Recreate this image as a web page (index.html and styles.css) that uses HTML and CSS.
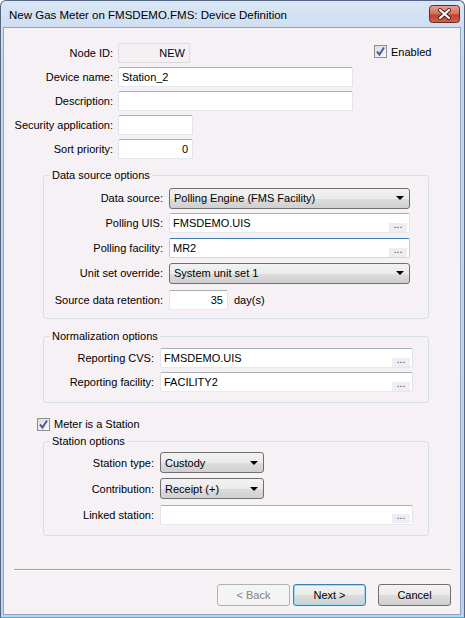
FILE: index.html
```html
<!DOCTYPE html>
<html lang="en">
<head>
    <meta charset="UTF-8">
    <title>New Gas Meter on FMSDEMO.FMS: Device Definition</title>
    <link rel="stylesheet" href="styles.css">
</head>
<body>
    <div class="window">
        <!-- title bar -->
        <div class="titlebar">
            <span class="title">New Gas Meter on FMSDEMO.FMS: Device Definition</span>
            <div class="close-btn">
                <svg width="31" height="18" viewBox="0 0 31 18">
                    <defs>
                        <linearGradient id="red" x1="0" y1="0" x2="0" y2="1">
                            <stop offset="0" stop-color="#e8a493"/>
                            <stop offset="0.5" stop-color="#d0705f"/>
                            <stop offset="0.55" stop-color="#c0402e"/>
                            <stop offset="1" stop-color="#d2614c"/>
                        </linearGradient>
                    </defs>
                    <rect x="0.5" y="0.5" width="30" height="17" rx="3" fill="url(#red)" stroke="#6b2a22"/>
                    <path d="M11 5 L20 13 M20 5 L11 13" stroke="#40201c" stroke-width="4" stroke-linecap="round"/>
                    <path d="M11 5 L20 13 M20 5 L11 13" stroke="#fff" stroke-width="2.2" stroke-linecap="round"/>
                </svg>
            </div>
        </div>

        <div class="client">
            <!-- general -->
            <div class="general">
                <div class="row">
                    <span class="label">Node ID:</span>
                    <div class="field readonly w-short num">NEW</div>
                    <label class="check enabled">
                        <span class="box">
                            <svg width="13" height="13" viewBox="0 0 13 13"><path d="M3 6.5 L5.5 9.5 L10 2.5" fill="none" stroke="#4a5e9c" stroke-width="2"/></svg>
                        </span>
                        Enabled
                    </label>
                </div>
                <div class="row">
                    <span class="label">Device name:</span>
                    <div class="field w-long">Station_2</div>
                </div>
                <div class="row">
                    <span class="label">Description:</span>
                    <div class="field w-long"></div>
                </div>
                <div class="row">
                    <span class="label">Security application:</span>
                    <div class="field w-mid"></div>
                </div>
                <div class="row">
                    <span class="label">Sort priority:</span>
                    <div class="field w-mid num">0</div>
                </div>
            </div>

            <!-- data source -->
            <fieldset class="group source">
                <legend>Data source options</legend>
                <div class="row">
                    <span class="label">Data source:</span>
                    <div class="combo w-wide"><span>Polling Engine (FMS Facility)</span><i class="arrow"></i></div>
                </div>
                <div class="row">
                    <span class="label">Polling UIS:</span>
                    <div class="field browse w-wide"><span>FMSDEMO.UIS</span><b>...</b></div>
                </div>
                <div class="row">
                    <span class="label">Polling facility:</span>
                    <div class="field browse focused w-wide"><span>MR2</span><b>...</b></div>
                </div>
                <div class="row">
                    <span class="label">Unit set override:</span>
                    <div class="combo w-wide"><span>System unit set 1</span><i class="arrow"></i></div>
                </div>
                <div class="row retention">
                    <span class="label">Source data retention:</span>
                    <div class="field w-days num">35</div>
                    <span class="unit">day(s)</span>
                </div>
            </fieldset>

            <!-- normalization -->
            <fieldset class="group norm">
                <legend>Normalization options</legend>
                <div class="row">
                    <span class="label">Reporting CVS:</span>
                    <div class="field browse w-full"><span>FMSDEMO.UIS</span><b>...</b></div>
                </div>
                <div class="row">
                    <span class="label">Reporting facility:</span>
                    <div class="field browse w-full"><span>FACILITY2</span><b>...</b></div>
                </div>
            </fieldset>

            <label class="check station-check">
                <span class="box">
                    <svg width="13" height="13" viewBox="0 0 13 13"><path d="M3 6.5 L5.5 9.5 L10 2.5" fill="none" stroke="#4a5e9c" stroke-width="2"/></svg>
                </span>
                Meter is a Station
            </label>

            <!-- station -->
            <fieldset class="group station">
                <legend>Station options</legend>
                <div class="row">
                    <span class="label">Station type:</span>
                    <div class="combo w-combo"><span>Custody</span><i class="arrow"></i></div>
                </div>
                <div class="row">
                    <span class="label">Contribution:</span>
                    <div class="combo w-combo"><span>Receipt (+)</span><i class="arrow"></i></div>
                </div>
                <div class="row">
                    <span class="label">Linked station:</span>
                    <div class="field browse w-full"><span></span><b>...</b></div>
                </div>
            </fieldset>

            <div class="separator"></div>

            <div class="buttons">
                <button class="btn" disabled>&lt; Back</button>
                <button class="btn default">Next &gt;</button>
                <button class="btn cancel">Cancel</button>
            </div>
        </div>
    </div>
</body>
</html>
```

FILE: styles.css
```css
body {
    margin: 0;
    font-family: "Liberation Sans", Arial, sans-serif;
    font-size: 11px;
    color: #000;
    background: #fff;
}
.window {
    width: 465px;
    height: 618px;
    box-sizing: border-box;
    background: linear-gradient(to bottom, #d9e6f5, #c3d6ec 60px, #bcd2ea);
    border: 1px solid #556684;
    border-bottom-color: #3dbad2;
    border-radius: 6px 6px 0 0;
    padding: 0 3px 2px 2px;
}
.titlebar {
    height: 26px;
    display: flex;
    align-items: center;
    justify-content: space-between;
    padding: 0 1px 0 6px;
}
.title {
    font-size: 11.5px;
    color: #000;
    margin-top: 1px;
}
.close-btn {
    display: flex;
}
.client {
    height: 588px;
    background-color: #f5f1f5;
    border: 1px solid #8fa6c3;
    box-sizing: border-box;
    display: flex;
    flex-direction: column;
}

/* rows */
.row {
    display: flex;
    align-items: center;
    height: 20px;
}
.label {
    text-align: right;
    white-space: nowrap;
    flex-shrink: 0;
}
.general {
    padding-top: 15px;
}
.general .row + .row {
    margin-top: 4px;
}
.general .label {
    width: 109px;
    margin-right: 5px;
}

/* text boxes */
.field {
    height: 20px;
    box-sizing: border-box;
    background: #fff;
    border: 1px solid #e2e3ea;
    border-top-color: #abadb3;
    border-bottom-color: #e3e9ef;
    border-radius: 2px;
    padding: 0 3px;
    display: flex;
    align-items: center;
    white-space: nowrap;
}
.field.num {
    justify-content: flex-end;
    padding-right: 4px;
}
.field.readonly {
    background: #f4f0f4;
    border-color: #dcdcdc;
}
.field.focused {
    border-color: #c5daed;
    border-top-color: #3d7bad;
    border-left-color: #b5cfe7;
    border-right-color: #b5cfe7;
}
.field.browse span {
    flex: 1;
}
.field.browse b {
    font-weight: normal;
    width: 18px;
    height: 9px;
    margin-top: 8px;
    margin-right: -1px;
    background: #f0edf0;
    font-size: 10px;
    line-height: 4px;
    text-align: center;
    color: #333;
}
.w-short { width: 72px; }
.w-mid { width: 75px; }
.w-long { width: 235px; }
.w-wide { width: 241px; }
.w-full { width: 253px; }
.w-days { width: 59px; }
.w-combo { width: 104px; }

/* combo boxes */
.combo {
    height: 21px;
    box-sizing: border-box;
    border: 1px solid #707070;
    border-radius: 3px;
    background: linear-gradient(to bottom, #f2f2f2 0%, #ebebeb 50%, #dddddd 51%, #cfcfcf 100%);
    display: flex;
    align-items: center;
    padding: 0 4px;
    white-space: nowrap;
}
.combo span {
    flex: 1;
}
.combo .arrow {
    width: 0;
    height: 0;
    border-left: 4px solid transparent;
    border-right: 4px solid transparent;
    border-top: 4px solid #000;
    margin-right: 1px;
}

/* check boxes */
.check {
    display: flex;
    align-items: center;
}
.check .box {
    width: 13px;
    height: 13px;
    box-sizing: border-box;
    border: 1px solid #8e8f8f;
    background: linear-gradient(135deg, #dcdcdc, #fafafa);
    margin-right: 4px;
    display: flex;
}
.check .box svg {
    margin: -1px;
}
.enabled {
    margin-left: 184px;
    align-self: flex-start;
    margin-top: 2px;
}
.station-check {
    margin: 14px 0 0 33px;
    height: 14px;
}

/* group boxes */
.group {
    margin: 0 0 0 39px;
    width: 386px;
    box-sizing: border-box;
    border: 1px solid #d5dfe5;
    border-radius: 3px;
    padding: 0;
    min-width: 0;
}
.group legend {
    margin-left: 6px;
    padding: 0 2px;
    line-height: 14px;
}
.source {
    margin-top: 9px;
    padding: 6px 0 8px 0;
}
.source .label {
    width: 119px;
    margin-right: 6px;
}
.source .row + .row {
    margin-top: 5px;
}
.source .row.retention {
    margin-top: 7px;
}
.unit {
    margin-left: 6px;
}
.norm {
    margin-top: 10px;
    padding: 5px 0 10px 0;
}
.norm .label,
.station .label {
    width: 110px;
    margin-right: 6px;
}
.norm .row + .row {
    margin-top: 4px;
}
.station {
    margin-top: 3px;
    padding: 4px 0 10px 0;
}
.station .row {
    height: 21px;
}
.station .row + .row {
    margin-top: 5px;
}

/* bottom */
.separator {
    margin: 33px 0 0 10px;
    width: 437px;
    height: 0;
    border-top: 1px solid #a0a0a0;
    border-bottom: 1px solid #fff;
}
.buttons {
    display: flex;
    justify-content: flex-end;
    margin-top: 13px;
    padding-right: 9px;
}
.btn {
    width: 73px;
    height: 22px;
    font-family: "Liberation Sans", Arial, sans-serif;
    font-size: 11px;
    color: #000;
    border: 1px solid #707070;
    border-radius: 3px;
    background: linear-gradient(to bottom, #f2f2f2 0%, #ebebeb 50%, #dddddd 51%, #cfcfcf 100%);
    padding: 0;
    margin-left: 3px;
}
.btn:disabled {
    color: #838383;
    border-color: #adb2b5;
    background: #f4f4f4;
}
.btn.default {
    border-color: #3c7fb1;
    box-shadow: inset 0 0 0 1px #9fdaf5;
}
.btn.cancel {
    margin-left: 12px;
}
```
